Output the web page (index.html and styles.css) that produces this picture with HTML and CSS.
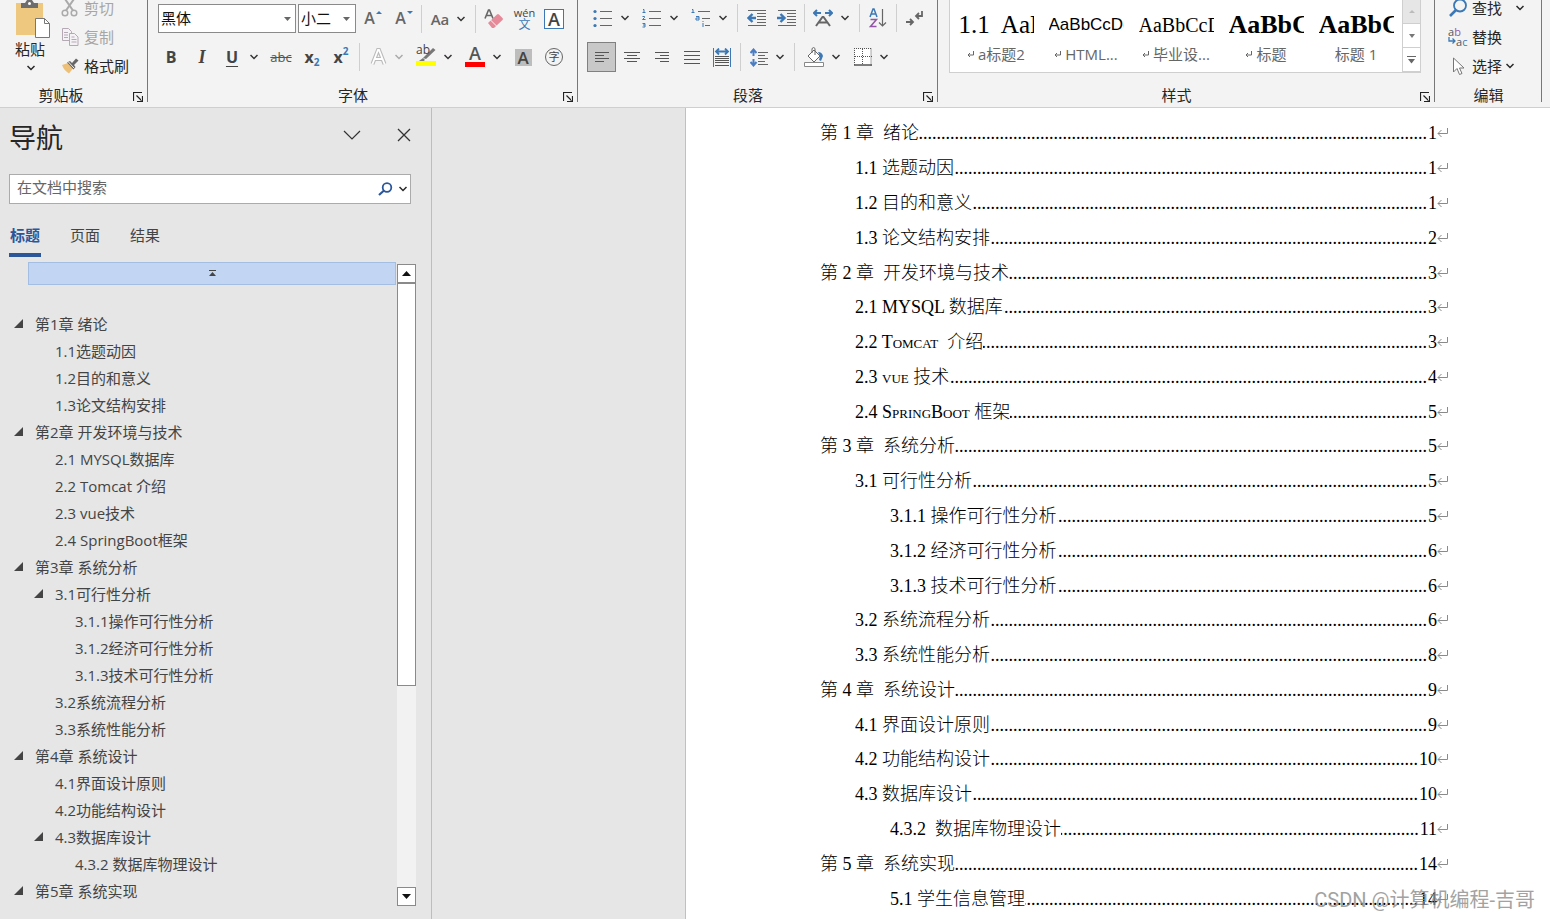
FILE: index.html
```html
<!DOCTYPE html>
<html lang="zh-CN">
<head>
<meta charset="utf-8">
<title>文档</title>
<link rel="stylesheet" href="styles.css">
</head>
<body>
<svg class="defs" aria-hidden="true">
  <symbol id="chev" viewBox="0 0 8 6"><path d="M.500 1l3.500 3.500L7.500 1" fill="none" stroke="currentColor" stroke-width="1.500"/></symbol>
  <symbol id="launch" viewBox="0 0 10 10"><path d="M.5 9V.5H9M3.500 3.500l5 5M9.500 4v5.500H4" fill="none" stroke="#222" stroke-width="1.200"/></symbol>
  <symbol id="ret" viewBox="0 0 11 10"><path d="M10.500 0v5.500H1M4.500 2L1 5.500 4.500 9" fill="none" stroke="#8a8a8a"/></symbol>
  <symbol id="mini" viewBox="0 0 7 8"><path d="M6.500 1v4H1M3 3L1 5l2 2" fill="none" stroke="#666"/></symbol>
  <symbol id="tri" viewBox="0 0 9 9"><path d="M9 0v9H0z" fill="#444"/></symbol>
</svg>

<header class="ribbon">
  <section class="group clipboard">
    <div class="clip-body">
      <button class="paste">
        <svg width="35" height="38" viewBox="0 0 35 38"><path d="M1 3h27v32H1z" fill="#edc87e"/><path d="M6 8V3h4l2-3h5l2 3h4v5z" fill="#6d6d6d"/><circle cx="14.500" cy="3.500" r="1.500" fill="#fff"/><path d="M20.500 18.500h9l5 5v14h-14z" fill="#fff" stroke="#777"/><path d="M29.500 18.500v5h5" fill="none" stroke="#777"/></svg>
        <span>粘贴</span>
        <svg width="8" height="6"><use href="#chev"/></svg>
      </button>
      <div class="stack">
        <button class="line off"><svg width="18" height="18" viewBox="0 0 18 18" fill="none" stroke="#aaa" stroke-width="1.500"><circle cx="4" cy="14" r="2.800"/><circle cx="13" cy="14" r="2.800"/><path d="M4 0l8 11.500M13 0L5 11.500" stroke-width="2"/></svg>剪切</button>
        <button class="line off"><svg width="18" height="18" viewBox="0 0 18 18" fill="#f5f2f5" stroke="#b5a9b5"><path d="M1.500.5h6l3 3v9h-9z"/><path d="M8.500 5.500h5l3.500 3.500v8.500H8.500z"/><path d="M3 4.500h4M3 7h4M3 9.500h4M10.500 9h3M10.500 11.500h5M10.500 14h5"/></svg>复制</button>
        <button class="line"><svg width="18" height="18" viewBox="0 0 18 18"><path d="M1 8l6-2 5 5.500-4 5q-5-3-7-8.500z" fill="#edc07a"/><path d="M6 5.500l3-1.500 2 2 4-4.500 2.500 2-4.500 4.500 1.500 2-2 2.500z" fill="#666"/><path d="M7.500 5l5.500 6" stroke="#f3f3f3"/></svg>格式刷</button>
      </div>
    </div>
    <footer><span>剪贴板</span><button aria-label="剪贴板选项"><svg width="10" height="10"><use href="#launch"/></svg></button></footer>
  </section>

  <section class="group fontgroup">
    <div class="row r1">
      <label class="combo"><select aria-label="字体"><option>黑体</option></select><svg width="7" height="4"><path d="M0 0h7L3.500 4z" fill="#666"/></svg></label>
      <label class="combo"><select aria-label="字号"><option>小二</option></select><svg width="7" height="4"><path d="M0 0h7L3.500 4z" fill="#666"/></svg></label>
      <button class="letter"><span>A</span><svg class="tip" width="6" height="3"><path d="M0 3l3-3 3 3z" fill="#3b78b5"/></svg></button>
      <button class="letter"><span>A</span><svg class="tip" width="6" height="3"><path d="M0 0l3 3 3-3z" fill="#3b78b5"/></svg></button>
      <i class="sep"></i>
      <button class="letter case">Aa<svg width="8" height="6"><use href="#chev"/></svg></button>
      <i class="sep"></i>
      <button aria-label="清除格式"><svg width="20" height="20" viewBox="0 0 20 20"><path d="M1 9.500L4.500 1h1L9 9.500M2.500 6.500H8" fill="none" stroke="#666" stroke-width="1.600"/><path d="M4 14l9-8.500q1-1 2 0l3.500 3.500q1 1 0 2L10 19H8z" fill="#e68a9a"/><path d="M6.500 11l6 6" stroke="#f3f3f3"/></svg></button>
      <button class="pinyin"><span>wén</span><b>文</b></button>
      <button><span class="boxed">A</span></button>
    </div>
    <div class="row r2">
      <button class="letter strong">B</button>
      <button class="letter strong ital">I</button>
      <button class="letter strong und">U</button>
      <button aria-label="下划线样式"><svg width="8" height="6"><use href="#chev"/></svg></button>
      <button class="strike">abc</button>
      <button class="letter strong">x<sub>2</sub></button>
      <button class="letter strong">x<sup>2</sup></button>
      <i class="sep"></i>
      <button class="pale" aria-label="文本效果"><svg width="17" height="20" viewBox="0 0 17 20"><path d="M2.500 17L8 3h1l5.500 14M4.500 12h8" fill="none" stroke="#bbb" stroke-width="4"/><path d="M2.500 17L8 3h1l5.500 14M4.500 12h8" fill="none" stroke="#fff" stroke-width="1.800"/></svg><svg width="8" height="6"><use href="#chev"/></svg></button>
      <button class="hl"><span class="mark"><span>ab</span><svg width="20" height="20" viewBox="0 0 20 20"><path d="M7 11L17 1l2.500 2L10 12z" fill="#777"/><path d="M3 14l4-3 2 2-2 1.500z" fill="#777"/><path d="M0 14h20v5H0z" fill="#ff0"/></svg></span><svg width="8" height="6"><use href="#chev"/></svg></button>
      <button class="letter"><span class="fcolor">A</span><svg width="8" height="6"><use href="#chev"/></svg></button>
      <button><span class="shaded">A</span></button>
      <button><span class="circled">字</span></button>
    </div>
    <footer><span>字体</span><button aria-label="字体选项"><svg width="10" height="10"><use href="#launch"/></svg></button></footer>
  </section>

  <section class="group para">
    <div class="row r1">
      <button aria-label="项目符号"><svg width="20" height="18" viewBox="0 0 20 18"><path d="M7 2.500h12M7 9.500h12M7 16.500h12" stroke="#666"/><g fill="#3b78b5"><circle cx="2" cy="2.500" r="1.600"/><circle cx="2" cy="9.500" r="1.600"/><circle cx="2" cy="16.500" r="1.600"/></g></svg><svg width="8" height="6"><use href="#chev"/></svg></button>
      <button aria-label="编号"><svg width="20" height="20" viewBox="0 0 20 20"><path d="M7 3.500h12M7 10.500h12M7 17.500h12" stroke="#666"/><path d="M1 1.500h1v3M.5 4.500h3M.5 8.500h2v1l-2 2h3M.5 15.500h2.500v3.500H.5M1 17h2" fill="none" stroke="#3b78b5"/></svg><svg width="8" height="6"><use href="#chev"/></svg></button>
      <button aria-label="多级列表"><svg width="20" height="20" viewBox="0 0 20 20"><path d="M7 3.500h12M11 10.500h8M14 17.500h5" stroke="#666"/><path d="M1 1.500h1v3M.5 4.500h3M5 8.500h3v3.500M8 10H5v2h3M12 13v1M12 15v4" fill="none" stroke="#3b78b5"/></svg><svg width="8" height="6"><use href="#chev"/></svg></button>
      <i class="sep"></i>
      <button aria-label="减少缩进"><svg width="19" height="18" viewBox="0 0 19 18"><path d="M1 1.500h18M10 4.500h9M10 7.500h9M10 10.500h9M10 13.500h9M1 16.500h18" stroke="#666"/><path d="M9 9H2M5.500 5L1.500 9l4 4" fill="none" stroke="#3b78b5" stroke-width="2.400"/></svg></button>
      <button aria-label="增加缩进"><svg width="19" height="18" viewBox="0 0 19 18"><path d="M1 1.500h18M10 4.500h9M10 7.500h9M10 10.500h9M10 13.500h9M1 16.500h18" stroke="#666"/><path d="M0 9h7M3.500 5l4 4-4 4" fill="none" stroke="#3b78b5" stroke-width="2.400"/></svg></button>
      <i class="sep"></i>
      <button aria-label="中文版式"><svg width="20" height="18" viewBox="0 0 20 18"><path d="M3 17l6.500-9h1L17 17M5.500 13.500h9" fill="none" stroke="#666" stroke-width="2"/><path d="M1 4h7M4 1L1 4l3 3M19 4h-7M16 1l3 3-3 3" fill="none" stroke="#3b78b5" stroke-width="2"/></svg><svg width="8" height="6"><use href="#chev"/></svg></button>
      <i class="sep"></i>
      <button aria-label="排序"><svg width="18" height="20" viewBox="0 0 18 20"><path d="M1 9l3-8h1l3 8M2 6h5" fill="none" stroke="#3b78b5" stroke-width="1.500"/><path d="M1.500 11.500h6l-6 7h6" fill="none" stroke="#9455a8" stroke-width="1.500"/><path d="M13.500 1v17M10 14.500l3.500 3.500 3.500-3.500" fill="none" stroke="#666" stroke-width="1.200"/></svg></button>
      <i class="sep"></i>
      <button aria-label="显示标记"><svg width="17" height="16" viewBox="0 0 17 16"><path d="M16 1v5h-5M13 3l-3 3 3 3M0 12h6M4 9l3 3-3 3" fill="none" stroke="#666" stroke-width="1.800"/></svg></button>
    </div>
    <div class="row r2">
      <button class="pressed" aria-label="左对齐"><svg width="16" height="12"><path d="M1 1.500h14M1 4.500h9M1 7.500h14M1 10.500h9" stroke="#555"/></svg></button>
      <button aria-label="居中"><svg width="16" height="12"><path d="M0 1.500h16M3 4.500h10M0 7.500h16M3 10.500h10" stroke="#555"/></svg></button>
      <button aria-label="右对齐"><svg width="16" height="12"><path d="M1 1.500h14M6 4.500h9M1 7.500h14M6 10.500h9" stroke="#555"/></svg></button>
      <button aria-label="两端对齐"><svg width="16" height="14"><path d="M0 1.500h16M0 5.500h16M0 9.500h16M0 13.500h16" stroke="#555"/></svg></button>
      <button aria-label="分散对齐"><svg width="18" height="19" viewBox="0 0 18 19"><path d="M.5 0v19M17.500 0v19" stroke="#3b78b5"/><path d="M3 3.500h12M6 .5l-3 3 3 3M12 .5l3 3-3 3" fill="none" stroke="#3b78b5" stroke-width="1.800"/><path d="M2 8.500h14M2 10.500h14M2 12.500h14M2 14.500h14M2 17.500h14" stroke="#555"/></svg></button>
      <i class="sep"></i>
      <button aria-label="行距"><svg width="18" height="19" viewBox="0 0 18 19"><path d="M3.500 2v6M.5 5l3-3.500 3 3.500M3.500 11v6M.5 14l3 3.500 3-3.500" fill="none" stroke="#4a7dc4" stroke-width="2"/><path d="M8 4.500h10M8 7.500h7M8 10.500h10M8 13.500h7M8 16.500h10" stroke="#666"/></svg><svg width="8" height="6"><use href="#chev"/></svg></button>
      <i class="sep"></i>
      <button aria-label="底纹"><svg width="20" height="20" viewBox="0 0 20 20"><path d="M4 9l6-6 6 6-6 6zM8 6V1.500q2-2 3 0V8" fill="#fff" stroke="#666"/><path d="M14 5q4 0 5 4l-2 5-2-1 1-4z" fill="#3b78b5"/><path d="M.5 15.500h19v4H.5z" fill="#fff" stroke="#888"/></svg><svg width="8" height="6"><use href="#chev"/></svg></button>
      <button aria-label="边框"><svg width="18" height="18" viewBox="0 0 18 18"><path d="M1 1h16v16H1z" fill="#fff"/><path d="M0 .5h17M.5 0v17M17 .5v17M8.500 1v16M1 8.500h17" fill="none" stroke="#555" stroke-dasharray="1 1"/><path d="M0 17h18" stroke="#555" stroke-width="1.500"/></svg><svg width="8" height="6"><use href="#chev"/></svg></button>
    </div>
    <footer><span>段落</span><button aria-label="段落选项"><svg width="10" height="10"><use href="#launch"/></svg></button></footer>
  </section>

  <section class="group styles">
    <div class="gallery">
      <button class="style"><span class="sample big">1.1&nbsp; AaBb</span><span class="name"><svg width="7" height="8"><use href="#mini"/></svg>a标题2</span></button>
      <button class="style"><span class="sample sans">AaBbCcDd</span><span class="name"><svg width="7" height="8"><use href="#mini"/></svg>HTML...</span></button>
      <button class="style"><span class="sample">AaBbCcDd</span><span class="name"><svg width="7" height="8"><use href="#mini"/></svg>毕业设...</span></button>
      <button class="style"><span class="sample big heavy">AaBbCc</span><span class="name"><svg width="7" height="8"><use href="#mini"/></svg>标题</span></button>
      <button class="style"><span class="sample big heavy">AaBbCc</span><span class="name">标题 1</span></button>
      <div class="spin">
        <button class="dim" aria-label="上一行"><svg width="6" height="3"><path d="M0 3l3-3 3 3z" fill="#bbb"/></svg></button>
        <button aria-label="下一行"><svg width="6" height="4"><path d="M0 0h6L3 4z" fill="#777"/></svg></button>
        <button aria-label="更多"><svg width="9" height="8"><path d="M0 .5h9" stroke="#666"/><path d="M1 3h7L4.500 7.500z" fill="#666"/></svg></button>
      </div>
    </div>
    <footer><span>样式</span><button aria-label="样式选项"><svg width="10" height="10"><use href="#launch"/></svg></button></footer>
  </section>

  <section class="group edit">
    <div class="stack">
      <button class="line"><svg width="20" height="20" viewBox="0 0 20 20" fill="none" stroke="#3b78b5"><circle cx="12" cy="7.500" r="6" stroke-width="1.800"/><path d="M8 12l-6 6" stroke-width="2.600"/></svg>查找<svg class="far" width="8" height="6"><use href="#chev"/></svg></button>
      <button class="line"><span class="swap"><span>a<em>b</em></span><span class="low"><svg width="8" height="7" viewBox="0 0 8 7"><path d="M1 0v4h6M4.500 1.500L7 4 4.500 6.500" fill="none" stroke="#3b78b5" stroke-width="1.300"/></svg>a<u>c</u></span></span>替换</button>
      <button class="line"><svg width="20" height="18" viewBox="0 0 20 18"><path d="M5.500 1v14l3.500-3.500 2.500 6 2.500-1-2.500-5.500H16z" fill="#fff" stroke="#777"/></svg>选择<svg width="8" height="6"><use href="#chev"/></svg></button>
    </div>
    <footer><span>编辑</span></footer>
  </section>
</header>

<main class="work">
  <aside class="nav">
    <div class="nav-head">
      <h1>导航</h1>
      <button aria-label="选项"><svg width="18" height="10"><path d="M1 1l8 8 8-8" fill="none" stroke="#333" stroke-width="1.200"/></svg></button>
      <button aria-label="关闭"><svg width="14" height="14"><path d="M1 1l12 12M13 1L1 13" stroke="#333" stroke-width="1.300"/></svg></button>
    </div>
    <div class="search">
      <input type="text" aria-label="在文档中搜索" placeholder="在文档中搜索">
      <button aria-label="搜索"><svg width="15" height="14" fill="none" stroke="#2b579a"><circle cx="9" cy="5.500" r="4.300" stroke-width="1.800"/><path d="M6 8.500L1 13" stroke-width="2.200"/></svg></button>
      <button aria-label="搜索选项"><svg width="8" height="6"><use href="#chev"/></svg></button>
    </div>
    <div class="tabs">
      <button class="on">标题</button><button>页面</button><button>结果</button>
    </div>
    <div class="outline">
      <div class="tree">
        <button class="top" aria-label="文档开头"><svg width="7" height="7"><path d="M0 .5h7" stroke="#444"/><path d="M0 6l3.500-4L7 6z" fill="#444"/></svg></button>
        <ul>
          <li><svg width="9" height="9"><use href="#tri"/></svg><a href="#c1">第1章 绪论</a></li>
          <li class="l2"><a href="#c11">1.1选题动因</a></li>
          <li class="l2"><a href="#c12">1.2目的和意义</a></li>
          <li class="l2"><a href="#c13">1.3论文结构安排</a></li>
          <li><svg width="9" height="9"><use href="#tri"/></svg><a href="#c2">第2章 开发环境与技术</a></li>
          <li class="l2"><a href="#c21">2.1 MYSQL数据库</a></li>
          <li class="l2"><a href="#c22">2.2 Tomcat 介绍</a></li>
          <li class="l2"><a href="#c23">2.3 vue技术</a></li>
          <li class="l2"><a href="#c24">2.4 SpringBoot框架</a></li>
          <li><svg width="9" height="9"><use href="#tri"/></svg><a href="#c3">第3章 系统分析</a></li>
          <li class="l2"><svg width="9" height="9"><use href="#tri"/></svg><a href="#c31">3.1可行性分析</a></li>
          <li class="l3"><a href="#c311">3.1.1操作可行性分析</a></li>
          <li class="l3"><a href="#c312">3.1.2经济可行性分析</a></li>
          <li class="l3"><a href="#c313">3.1.3技术可行性分析</a></li>
          <li class="l2"><a href="#c32">3.2系统流程分析</a></li>
          <li class="l2"><a href="#c33">3.3系统性能分析</a></li>
          <li><svg width="9" height="9"><use href="#tri"/></svg><a href="#c4">第4章 系统设计</a></li>
          <li class="l2"><a href="#c41">4.1界面设计原则</a></li>
          <li class="l2"><a href="#c42">4.2功能结构设计</a></li>
          <li class="l2"><svg width="9" height="9"><use href="#tri"/></svg><a href="#c43">4.3数据库设计</a></li>
          <li class="l3"><a href="#c432">4.3.2 数据库物理设计</a></li>
          <li><svg width="9" height="9"><use href="#tri"/></svg><a href="#c5">第5章 系统实现</a></li>
        </ul>
      </div>
      <div class="scroll">
        <button aria-label="向上"><svg width="9" height="5"><path d="M0 5l4.500-5L9 5z" fill="#111"/></svg></button>
        <div class="track"><div class="thumb"></div></div>
        <button aria-label="向下"><svg width="9" height="5"><path d="M0 0l4.500 5L9 0z" fill="#111"/></svg></button>
      </div>
    </div>
  </aside>

  <div class="canvas">
    <article class="page">
      <ol class="toc">
        <li id="c1"><span>第 1 章&nbsp; 绪论</span><i></i><b>1</b><svg width="11" height="10"><use href="#ret"/></svg></li>
        <li id="c11" class="t2"><span>1.1 选题动因</span><i></i><b>1</b><svg width="11" height="10"><use href="#ret"/></svg></li>
        <li id="c12" class="t2"><span>1.2 目的和意义</span><i></i><b>1</b><svg width="11" height="10"><use href="#ret"/></svg></li>
        <li id="c13" class="t2"><span>1.3 论文结构安排</span><i></i><b>2</b><svg width="11" height="10"><use href="#ret"/></svg></li>
        <li id="c2"><span>第 2 章&nbsp; 开发环境与技术</span><i></i><b>3</b><svg width="11" height="10"><use href="#ret"/></svg></li>
        <li id="c21" class="t2"><span>2.1 MYSQL 数据库</span><i></i><b>3</b><svg width="11" height="10"><use href="#ret"/></svg></li>
        <li id="c22" class="t2 caps"><span>2.2 Tomcat&nbsp; 介绍</span><i></i><b>3</b><svg width="11" height="10"><use href="#ret"/></svg></li>
        <li id="c23" class="t2 caps"><span>2.3 vue 技术</span><i></i><b>4</b><svg width="11" height="10"><use href="#ret"/></svg></li>
        <li id="c24" class="t2 caps"><span>2.4 SpringBoot 框架</span><i></i><b>5</b><svg width="11" height="10"><use href="#ret"/></svg></li>
        <li id="c3"><span>第 3 章&nbsp; 系统分析</span><i></i><b>5</b><svg width="11" height="10"><use href="#ret"/></svg></li>
        <li id="c31" class="t2"><span>3.1 可行性分析</span><i></i><b>5</b><svg width="11" height="10"><use href="#ret"/></svg></li>
        <li id="c311" class="t3"><span>3.1.1 操作可行性分析</span><i></i><b>5</b><svg width="11" height="10"><use href="#ret"/></svg></li>
        <li id="c312" class="t3"><span>3.1.2 经济可行性分析</span><i></i><b>6</b><svg width="11" height="10"><use href="#ret"/></svg></li>
        <li id="c313" class="t3"><span>3.1.3 技术可行性分析</span><i></i><b>6</b><svg width="11" height="10"><use href="#ret"/></svg></li>
        <li id="c32" class="t2"><span>3.2 系统流程分析</span><i></i><b>6</b><svg width="11" height="10"><use href="#ret"/></svg></li>
        <li id="c33" class="t2"><span>3.3 系统性能分析</span><i></i><b>8</b><svg width="11" height="10"><use href="#ret"/></svg></li>
        <li id="c4"><span>第 4 章&nbsp; 系统设计</span><i></i><b>9</b><svg width="11" height="10"><use href="#ret"/></svg></li>
        <li id="c41" class="t2"><span>4.1 界面设计原则</span><i></i><b>9</b><svg width="11" height="10"><use href="#ret"/></svg></li>
        <li id="c42" class="t2"><span>4.2 功能结构设计</span><i></i><b>10</b><svg width="11" height="10"><use href="#ret"/></svg></li>
        <li id="c43" class="t2"><span>4.3 数据库设计</span><i></i><b>10</b><svg width="11" height="10"><use href="#ret"/></svg></li>
        <li id="c432" class="t3"><span>4.3.2&nbsp; 数据库物理设计</span><i></i><b>11</b><svg width="11" height="10"><use href="#ret"/></svg></li>
        <li id="c5"><span>第 5 章&nbsp; 系统实现</span><i></i><b>14</b><svg width="11" height="10"><use href="#ret"/></svg></li>
        <li id="c51" class="t3"><span>5.1 学生信息管理</span><i></i><b>14</b><svg width="11" height="10"><use href="#ret"/></svg></li>
      </ol>
    </article>
  </div>
  <div class="watermark">CSDN @计算机编程-吉哥</div>
</main>
</body>
</html>
```
FILE: styles.css
```css
* { box-sizing: border-box; }
body {
  margin: 0;
  height: 100vh;
  display: flex;
  flex-direction: column;
  overflow: hidden;
  background: #e6e6e6;
  color: #262626;
  font: 15px/20px "Open Sans", "Noto Sans CJK SC", sans-serif;
}
button {
  display: flex;
  align-items: center;
  justify-content: center;
  padding: 0;
  border: 0;
  background: none;
  color: inherit;
  font: inherit;
}
svg { flex: none; display: block; }
.defs { position: absolute; width: 0; height: 0; }

/* Ribbon */
.ribbon {
  display: flex;
  flex: none;
  height: 108px;
  padding-right: 8px;
  background: #f3f3f3;
  border-bottom: 1px solid #cfcfcf;
}
.group {
  position: relative;
  display: flex;
  flex-direction: column;
  flex: none;
  padding-bottom: 2px;
}
.group::after {
  content: "";
  position: absolute;
  right: 0;
  top: 0;
  bottom: 5px;
  border-right: 1px solid #777;
}
.group footer { display: flex; margin-top: auto; text-align: center; }
.group footer span { flex: 1; }
.group footer button { width: 20px; padding-top: 4px; }
.clipboard { width: 148px; }
.clipboard footer span { padding-right: 6px; }
.fontgroup { width: 430px; padding-left: 10px; }
.para { width: 360px; padding-left: 9px; }
.fontgroup footer { margin-left: -10px; }
.para footer { margin-left: -9px; }
.styles { flex: 1; min-width: 490px; }
.edit { width: 107px; }

.clip-body { display: flex; align-items: flex-start; }
.paste { flex-direction: column; justify-content: flex-start; width: 45px; margin-left: 10px; }
.paste span { margin: 1px 5px 6px 0; }
.paste svg:last-child { margin-right: 4px; }
.stack { display: flex; flex-direction: column; }
.clipboard .stack { margin-left: 6px; }
.line {
  justify-content: flex-start;
  gap: 5px;
  height: 29px;
}
.stack .line:first-child { height: 22px; padding-bottom: 6px; }
.off { color: #a6a6a6; }

.row { display: grid; align-items: center; color: #333; }
.row button { height: 28px; gap: 8px; }
.r1 { margin-top: 4px; height: 28px; }
.r2 { margin-top: 10px; height: 30px; }
.fontgroup .r1 { grid-template-columns: 140px 58px 34px 28px 6px 48px 6px 32px 29px 30px; }
.fontgroup .r2 { grid-template-columns: 26px 36px 24px 20px 34px 28px 30px 6px 48px 48px 50px 30px 32px; }
.para .r1 { grid-template-columns: 48px 50px 48px 8px 30px 30px 6px 48px 8px 30px 6px 30px; }
.para .r2 { grid-template-columns: repeat(5, 30px) 7px 46px 8px 48px 50px; }
.sep { width: 1px; height: 28px; background: #cfcfcf; justify-self: center; }

.combo { position: relative; height: 29px; }
.combo:first-child { padding-right: 2px; }
.combo select {
  width: 100%;
  height: 29px;
  padding: 0 2px 2px;
  appearance: none;
  border: 1px solid #8a8a8a;
  border-radius: 0;
  background: #fff;
  color: #111;
  font: inherit;
}
.combo svg { position: absolute; right: 6px; top: 13px; }
.combo:first-child svg { right: 7px; }
.letter { font-size: 16px; font-weight: 600; color: #666; }
.case { font-size: 15px; }
.row .letter:has(.tip) { gap: 1px; align-items: flex-start; padding-top: 3px; }
.letter .tip { margin-top: 3px; }
.letter svg { color: #333; }
.strong { font-weight: 700; color: #444; }
.row .strong { gap: 0; }
.ital { font-family: "Liberation Serif", serif; font-style: italic; font-size: 18px; }
.und { text-decoration: underline; text-underline-offset: 3px; text-decoration-thickness: 1px; }
.strike { font-size: 13px; color: #555; text-decoration: line-through; }
.letter sub, .letter sup { font-size: 10px; line-height: 10px; color: #3b78b5; }
.letter sub { padding-top: 10px; }
.letter sup { padding-bottom: 12px; }
.row .pinyin { flex-direction: column; gap: 0; font-size: 11px; line-height: 11px; color: #444; }
.pinyin b { font-size: 12px; line-height: 13px; font-weight: 400; color: #3b78b5; }
.boxed { width: 20px; height: 20px; border: 1px solid #3b78b5; background: #fff; font-size: 18px; line-height: 18px; font-weight: 600; color: #444; }
.pale { color: #aaa; }
.mark { position: relative; width: 20px; height: 20px; font-size: 12px; line-height: 12px; color: #444; }
.mark span { position: absolute; left: 0; top: -3px; }
.fcolor { width: 20px; height: 20px; border-bottom: 5px solid #f00; font-size: 18px; line-height: 13px; color: #555; }
.shaded { width: 17px; height: 17px; background: #bdbdbd; font-size: 17px; line-height: 17px; font-weight: 600; color: #444; }
.circled { width: 18px; height: 18px; border: 1px solid #666; border-radius: 50%; font-size: 11px; line-height: 15px; color: #444; }
.row .pressed { height: 30px; width: 29px; background: #c8c8c8; border: 1px solid #808080; }

.gallery { display: flex; height: 73px; margin: 0 14px 0 11px; padding-left: 1px; background: #fff; border: solid #cfcfcf; border-width: 0 0 1px 1px; }
.style { flex-direction: column; justify-content: flex-start; width: 90px; padding-top: 12px; }
.sample {
  width: 75px;
  overflow: hidden;
  white-space: nowrap;
  text-align: left;
  font: 20px/26px "Liberation Serif", serif;
  color: #000;
}
.sample.big { font-size: 25px; }
.sample.sans { font: 17px/26px "Liberation Sans", sans-serif; }
.sample.heavy { font-size: 26px; font-weight: 700; }
.name { display: flex; align-items: center; gap: 4px; margin-top: 6px; color: #666; }
.spin { display: flex; flex-direction: column; width: 19px; margin-left: auto; }
.spin button { flex: 1; border: 1px solid #cfcfcf; border-top: 0; }
.spin .dim { background: #e6e6e6; }

.edit .stack { margin-left: 13px; }
.edit .line { gap: 4px; }
.edit .far { margin-left: 10px; }
.swap { display: flex; flex-direction: column; width: 20px; font-size: 11px; line-height: 10px; text-align: left; color: #555; }
.swap em { font-style: normal; color: #9455a8; }
.swap u { text-decoration: none; color: #3b78b5; }
.low { display: flex; }

/* Navigation pane */
.work { position: relative; display: flex; flex: 1; min-height: 0; }
.nav {
  display: flex;
  flex-direction: column;
  flex: none;
  width: 432px;
  border-right: 1px solid #bdbdbd;
}
.nav-head { display: flex; align-items: flex-start; padding: 10px 20px 0 9px; height: 66px; }
.nav-head h1 { flex: 1; margin: 0; font-size: 27px; line-height: 40px; font-weight: 400; }
.nav-head button { height: 34px; margin-left: 36px; }
.search { display: flex; height: 30px; margin: 0 20px 0 9px; background: #fff; border: 1px solid #ababab; }
.search input { flex: 1; min-width: 0; padding: 0 7px 4px; border: 0; background: none; font: inherit; color: #333; }
.search input::placeholder { color: #666; opacity: 1; }
.search button { margin-right: 3px; width: 15px; }
.search button:last-child { width: 10px; margin: 0 2px; }
.tabs { display: flex; gap: 28px; margin: 20px 0 0 9px; }
.tabs button { width: 32px; height: 33px; padding-bottom: 8px; border-bottom: 4px solid transparent; color: #444; }
.tabs .on { color: #2b579a; border-color: #2b579a; font-weight: 700; }
.outline { display: flex; flex: 1; min-height: 0; padding: 5px 15px 13px 0; }
.tree { flex: 1; min-width: 0; color: #444; }
.top { width: calc(100% - 29px); height: 23px; margin-left: 28px; background: #c2d5f2; border: 1px solid #a3bde3; }
.tree ul { list-style: none; margin: 25px 0 0; padding: 0; }
.tree li { display: flex; align-items: center; justify-content: flex-start; gap: 12px; height: 27px; padding-left: 14px; }
.tree .l2 { padding-left: 34px; }
.tree .l3 { padding-left: 54px; }
.tree li a:only-child { margin-left: 21px; }
.tree a { color: inherit; text-decoration: none; white-space: nowrap; }
.scroll { display: flex; flex-direction: column; width: 19px; margin-top: 2px; background: #f2f2f2; }
.scroll button { height: 19px; border: 1px solid #8a8a8a; background: #fff; }
.track { flex: 1; }
.thumb { height: calc(200% / 3); border: 1px solid #8a8a8a; background: #fff; }

/* Document */
.canvas { display: flex; flex: 1; min-width: 0; padding-left: 253px; }
.page { flex: 1; min-width: 0; display: flex; border-left: 1px solid #c0c0c0; background: #fff; }
.toc {
  flex: 1;
  min-width: 0;
  display: flex;
  flex-direction: column;
  list-style: none;
  margin: 0;
  padding: 8px 102px 3px 134px;
  color: #000;
  font: 300 18px/26px "Liberation Serif", "Noto Sans CJK SC", serif;
}
.toc li { display: flex; flex: 1; align-items: center; white-space: nowrap; }
.toc .t2 { padding-left: 35px; }
.toc .t3 { padding-left: 70px; }
.caps { font-variant: small-caps; }
.toc i { flex: 1; display: flex; justify-content: flex-end; overflow: hidden; margin: 0 1px 0 0; font-style: normal; }
.toc i::before {
  content: "......................................................................................................................................................";
}
.toc b { font-weight: 400; }
.watermark {
  position: absolute;
  right: 15px;
  bottom: 6px;
  color: #8c8c8c;
  opacity: 0.8;
  font: 20px/26px Roboto, "Noto Sans CJK SC", sans-serif;
}
```
